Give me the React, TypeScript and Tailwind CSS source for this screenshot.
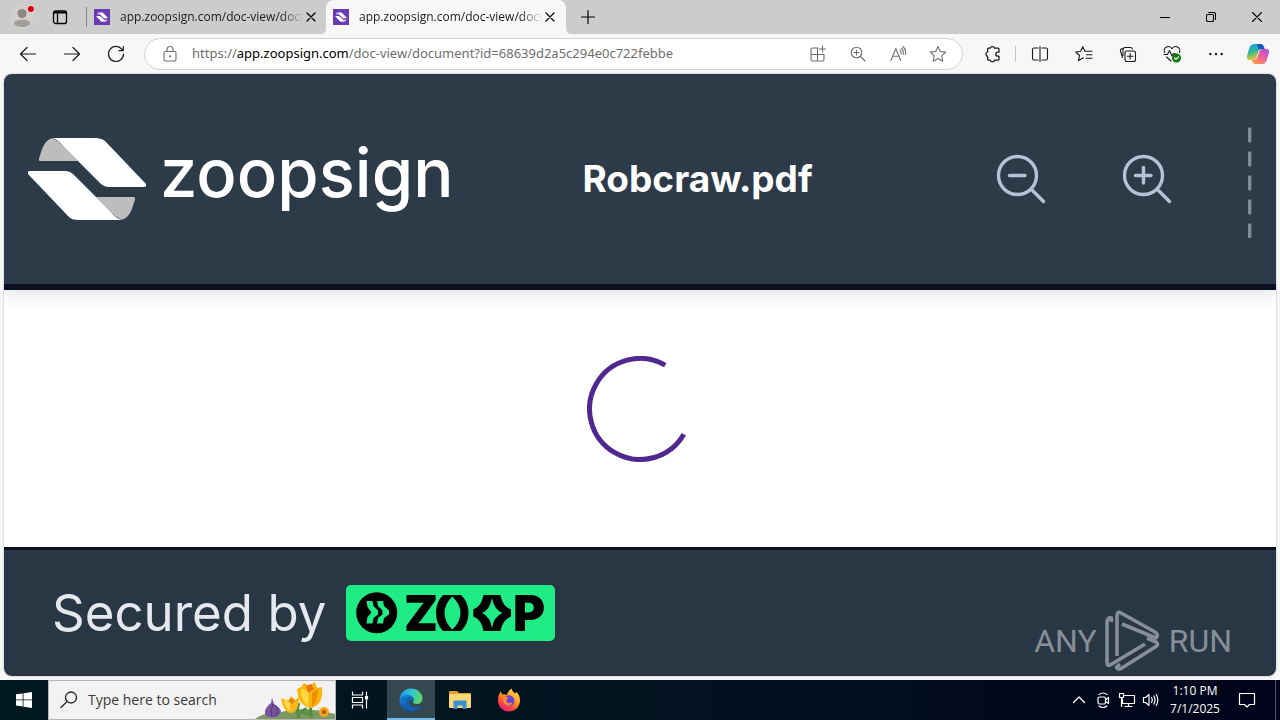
import type { ReactNode } from "react";

type IconProps = { children: ReactNode; className?: string; box?: string; width?: number };

function Icon({ children, className = "size-5", box = "0 0 20 20", width = 1.1 }: IconProps) {
  return (
    <svg
      viewBox={box}
      className={className}
      fill="none"
      stroke="currentColor"
      strokeWidth={width}
      strokeLinecap="round"
      strokeLinejoin="round"
      aria-hidden="true"
    >
      {children}
    </svg>
  );
}

function BarButton({ label, children, className = "w-11" }: { label: string; children: ReactNode; className?: string }) {
  return (
    <button type="button" aria-label={label} className={`flex h-8 shrink-0 items-center justify-center ${className}`}>
      {children}
    </button>
  );
}

function Favicon() {
  return (
    <svg viewBox="0 0 16 16" className="size-4 shrink-0" aria-hidden="true">
      <rect width="16" height="16" fill="#6a3ab2" />
      <path d="M4 3.4H8.6L13.6 8.6Q13.8 9.2 13.2 9.2H10L6 5.6Q5.2 4 4 3.4Z" fill="#fff" />
      <path d="M12 12.8H7.4L2.4 7.6Q2.2 7 2.8 7H6L10 10.6Q10.8 12.2 12 12.8Z" fill="#fff" />
      <path d="M4 3.4Q3 4.2 2.8 5.6H6Z" fill="#cdb8ea" />
      <path d="M12 12.8Q13 12 13.2 10.4H9.8Z" fill="#cdb8ea" />
    </svg>
  );
}

function Tab({ active = false }: { active?: boolean }) {
  return (
    <div
      role="tab"
      aria-selected={active}
      className={`relative flex h-full w-60 items-center rounded-t-lg pl-[7px] ${active ? "bg-[#f7f7f7]" : ""}`}
    >
      {active && (
        <>
          <svg viewBox="0 0 6 6" className="absolute bottom-0 -left-1.5 size-1.5" aria-hidden="true">
            <path d="M6 0V6H0Q6 6 6 0Z" fill="#f7f7f7" />
          </svg>
          <svg viewBox="0 0 6 6" className="absolute -right-1.5 bottom-0 size-1.5" aria-hidden="true">
            <path d="M0 0V6H6Q0 6 0 0Z" fill="#f7f7f7" />
          </svg>
        </>
      )}
      <Favicon />
      <span className="ml-2.5 shrink-0 text-xs whitespace-nowrap text-[#1b1b1b] [mask-image:linear-gradient(to_right,black_86%,transparent_98%)]">
        app.zoopsign.com/doc-view/docu
      </span>
      <button type="button" aria-label="Close tab" className="absolute right-[9px] flex h-6 w-3.5 items-center justify-center">
        <Icon className="size-2.5" box="0 0 10 10" width={1.2}>
          <path d="M1 1L9 9M9 1L1 9" />
        </Icon>
      </button>
    </div>
  );
}

function TabStrip() {
  return (
    <div className="flex h-[34px] items-center bg-[#ccc]">
      <button type="button" aria-label="Profile" className="flex w-11 justify-center">
        <svg viewBox="0 0 24 24" className="size-6" aria-hidden="true">
          <circle cx="12" cy="12" r="11.5" fill="#d2d0ce" />
          <circle cx="12" cy="8.6" r="4.6" fill="#8d8986" />
          <path d="M4 18.5Q4 14.8 12 14.8T20 18.5Q18 22 12 22T4 18.5Z" fill="#a19d9a" />
          <circle cx="20.8" cy="4" r="4.2" fill="#f0d0d0" />
          <circle cx="20.8" cy="4" r="3" fill="#d4000f" />
        </svg>
      </button>
      <button type="button" aria-label="Tab actions" className="flex w-8 justify-center">
        <Icon className="size-4" box="0 0 16 16" width={1.3}>
          <rect x="1.5" y="2" width="13" height="12.5" rx="2" />
          <path d="M2 3.5H14" strokeWidth="2" />
          <path d="M5.5 5V14" />
        </Icon>
      </button>
      <div className="ml-2.5 h-5 w-px bg-[#8a8a8a]" />
      <div role="tablist" className="flex h-full">
        <div className="-mr-px flex">
          <Tab />
        </div>
        <Tab active />
      </div>
      <button type="button" aria-label="New tab" className="ml-2 flex w-7 justify-center">
        <Icon className="size-4" box="0 0 16 16" width={1.2}>
          <path d="M8 1.5V14.5M1.5 8H14.5" />
        </Icon>
      </button>
      <div className="ml-auto flex text-black">
        <BarButton label="Minimize" className="w-[46px]">
          <Icon className="size-2.5" box="0 0 10 10">
            <path d="M0.5 5.5H9.5" />
          </Icon>
        </BarButton>
        <BarButton label="Restore" className="w-[46px]">
          <Icon className="size-2.5" box="0 0 10 10">
            <rect x="0.5" y="2.5" width="7" height="7" rx="1.2" />
            <path d="M2.8 0.5H7.5Q9.5 0.5 9.5 2.5V7.4" />
          </Icon>
        </BarButton>
        <BarButton label="Close" className="w-[46px]">
          <Icon className="size-2.5" box="0 0 10 10">
            <path d="M0.5 0.5L9.5 9.5M9.5 0.5L0.5 9.5" />
          </Icon>
        </BarButton>
      </div>
    </div>
  );
}

function Toolbar() {
  return (
    <div className="flex h-10 items-center bg-[#f7f7f7] pr-0.5 pl-1.5 text-[#1b1b1b]">
      <BarButton label="Back">
        <Icon width={1.2}>
          <path d="M17.5 10H2.5M9 3.5L2.5 10L9 16.5" />
        </Icon>
      </BarButton>
      <BarButton label="Forward">
        <Icon width={1.2}>
          <path d="M2.5 10H17.5M11 3.5L17.5 10L11 16.5" />
        </Icon>
      </BarButton>
      <BarButton label="Refresh">
        <Icon width={1.2}>
          <path d="M17.5 10A7.5 7.5 0 1 1 15.8 5.2L17 6.6M17.3 2.5V6.7H13" />
        </Icon>
      </BarButton>
      <div className="mr-2 ml-1.5 flex h-8 min-w-0 flex-1 items-center rounded-full border border-[#d4d4d4] bg-white pl-[15px] text-[#6e6e6e]">
        <Icon>
          <rect x="4" y="7.5" width="12" height="9.5" rx="1.5" />
          <path d="M7 7.5V5.5A3 3 0 0 1 13 5.5V7.5" />
          <circle cx="10" cy="12.2" r="0.5" fill="currentColor" />
        </Icon>
        <div
          role="textbox"
          aria-label="Address and search bar"
          contentEditable
          suppressContentEditableWarning
          className="ml-3 min-w-0 flex-1 truncate font-['Noto_Sans','Open_Sans',sans-serif] text-[13px] outline-none"
        >
          https://<span className="text-black">app.zoopsign.com</span>/doc-view/document?id=68639d2a5c294e0c722febbe
        </div>
        <div className="mr-1 flex">
          <BarButton label="Install app" className="w-10">
            <Icon className="size-[18px]" box="0 0 18 18">
              <path d="M9 3H3.5Q2 3 2 4.5V14.5Q2 16 3.5 16H13.5Q15 16 15 14.5V9.5M2 9.5H15M8.5 3V16M13.5 1V7M10.5 4H16.5" />
            </Icon>
          </BarButton>
          <BarButton label="Page zoom" className="w-10">
            <Icon className="size-[18px]" box="0 0 18 18">
              <circle cx="7.5" cy="7.5" r="5.3" />
              <path d="M11.5 11.5L16 16M7.5 5V10M5 7.5H10" />
            </Icon>
          </BarButton>
          <BarButton label="Read aloud" className="w-10">
            <Icon className="size-[18px]" box="0 0 18 18">
              <path d="M2 15.5L6.8 3.5L11.6 15.5M3.7 11.3H9.9M11 5.2Q12.5 6.7 12 9M12.3 3Q15 5.5 14.2 9.5M14 1.5Q17.6 4.8 16.4 9.5" />
            </Icon>
          </BarButton>
          <BarButton label="Add to favorites" className="w-10">
            <Icon>
              <path d="M10 2.5L12.3 7.5L17.7 8.1L13.7 11.8L14.8 17.2L10 14.5L5.2 17.2L6.3 11.8L2.3 8.1L7.7 7.5Z" />
            </Icon>
          </BarButton>
        </div>
      </div>
      <BarButton label="Extensions">
        <Icon width={1.3}>
          <path d="M5.6 4.2H7.2A2.3 2.3 0 0 1 11.6 4.2H15Q16 4.2 16 5.2V8.2H14.8A2 2 0 0 0 14.8 12.2H16V15.2Q16 16.2 15 16.2H11.6A2.3 2.3 0 0 1 7.2 16.2H5.8Q4.6 16.2 4.6 15.2V12.4A2.3 2.3 0 0 1 4.6 8V5.2Q4.6 4.2 5.6 4.2" />
        </Icon>
      </BarButton>
      <div className="mr-0.5 h-4 w-px bg-[#c4c4c4]" />
      <BarButton label="Split screen">
        <Icon>
          <path d="M8 4H4Q2.5 4 2.5 5.5V14.5Q2.5 16 4 16H8M12 4H16Q17.5 4 17.5 5.5V14.5Q17.5 16 16 16H12M10 2.5V17.5" />
        </Icon>
      </BarButton>
      <BarButton label="Favorites">
        <Icon>
          <path d="M10.5 7.2H18M12.5 10.7H18M12 14.2H18M9.5 13.8L4.5 16.6L5.5 11.5L1.8 8L6.6 7.3L8.8 2.8L10.8 7" />
        </Icon>
      </BarButton>
      <BarButton label="Collections">
        <Icon>
          <rect x="7" y="7" width="10.5" height="10.5" rx="2" />
          <path d="M12.2 9.5V15M9.5 12.2H15M4.5 13.5L2.5 7Q2 5.3 3.7 4.8L6 4M5 11.5V5.5Q5 3.5 7 3.5H12.5Q14 3.5 14.3 5" />
        </Icon>
      </BarButton>
      <BarButton label="Browser essentials">
        <Icon>
          <path d="M2.6 8.5A4 4 0 0 1 10 4.8A4 4 0 0 1 17.4 8.5M2 10.5H5.5L7.5 6.5L10 12L11.5 9.5H13M4.5 13L9 17" />
          <circle cx="14.5" cy="14" r="4.5" fill="#107c10" stroke="none" />
          <path d="M12.5 14L14 15.4L16.6 12.7" stroke="#fff" />
        </Icon>
      </BarButton>
      <BarButton label="Settings and more">
        <svg viewBox="0 0 20 20" className="size-5" fill="currentColor" aria-hidden="true">
          <circle cx="4.3" cy="10" r="1.2" />
          <circle cx="10" cy="10" r="1.2" />
          <circle cx="15.7" cy="10" r="1.2" />
        </svg>
      </BarButton>
      <BarButton label="Copilot" className="w-10">
        <svg viewBox="0 0 24 24" className="size-6" aria-hidden="true">
          <defs>
            <linearGradient id="cop-a" x1="0" y1="0" x2="0.3" y2="1">
              <stop offset="0" stopColor="#1fa3f0" />
              <stop offset="0.5" stopColor="#2cb59a" />
              <stop offset="1" stopColor="#f0c92f" />
            </linearGradient>
            <linearGradient id="cop-b" x1="1" y1="0" x2="0.2" y2="1">
              <stop offset="0" stopColor="#a052e8" />
              <stop offset="0.5" stopColor="#ee5fa0" />
              <stop offset="1" stopColor="#fb9a4b" />
            </linearGradient>
          </defs>
          <path d="M8 2H15Q17 2 18 5L18.6 7H15Q13 7 12.3 9.5L10.3 16Q9.5 18 7.5 18H4Q0 18 1.2 13L3.5 5.5Q4.6 2 8 2Z" fill="url(#cop-a)" />
          <path d="M11 2H15Q17 2 18 5L18.6 7H15Q13 7 12.6 8Z" fill="#1754c4" />
          <path d="M16 22H9Q7 22 6.3 19.5L5.8 18H8.5Q10.5 18 11.4 15L13.6 8.5Q14.3 7 16 7H20Q24 7 22.8 11.5L20.5 18.5Q19.4 22 16 22Z" fill="url(#cop-b)" />
        </svg>
      </BarButton>
    </div>
  );
}

function ZoopsignLogo() {
  const band = "M22 0H67C72 0 75 1 78 4L118 46Q119 49 116 49H81Q76 49 72 45L36 9C31 3 27 0 22 0Z";
  const fold = "M22 1C16 3 13 14 11 20.5Q10.5 23 12 23H50L33 6C29 2 25 0 22 1Z";
  return (
    <a href="#home" className="flex items-center gap-3.5 text-white">
      <svg viewBox="0 0 118 82" className="h-[82px] w-[118px] shrink-0" aria-hidden="true">
        <path d={fold} fill="#bdbdbd" />
        <path d={band} fill="#fff" />
        <g transform="rotate(180 59 41)">
          <path d={fold} fill="#bdbdbd" />
          <path d={band} fill="#fff" />
        </g>
      </svg>
      <span className="-mt-3 font-[Inter,sans-serif] text-[67px] leading-20 font-medium">zoopsign</span>
    </a>
  );
}

function ZoomButton({ label, plus = false }: { label: string; plus?: boolean }) {
  return (
    <button type="button" aria-label={label} className="text-[#b3c3d3]">
      <Icon className="size-[50px]" box="0 0 50 50" width={3.4}>
        <circle cx="21.5" cy="21.5" r="19" />
        <path d="M35.5 35.5L47.5 47.5M13.5 21.5H29" />
        {plus && <path d="M21.5 13.5V29" />}
      </Icon>
    </button>
  );
}

function ZoopBadge() {
  return (
    <svg viewBox="0 0 209 56" className="h-14 w-[209px]" role="img" aria-label="ZOOP">
      <rect width="209" height="56" rx="5" fill="#1fec85" />
      <circle cx="30.7" cy="27.7" r="20.5" />
      <path d="M20.5 16H26.5L27.5 21L32 25.5V29.5L27.5 33L26.5 38.5H20.5L21.5 32L25.5 27.5L21.5 22Z" fill="#1fec85" />
      <path d="M31 16H37L38 21L43 25.5V29.5L38 33L37 38.5H31L32 33L36.5 29.5V25.5L32 21Z" fill="#1fec85" />
      <text x="58" y="45.5" className="font-[Inter,sans-serif] text-[49px] font-black">Z</text>
      <path d="M97 10H115Q122.5 17 122.5 28T115 46H97Q90 39 90 28T97 10Z" />
      <path d="M106.3 11.5Q114.5 19 114.5 28T106.3 44.5Q98.5 37 98.5 28T106.3 11.5Z" fill="#1fec85" />
      <path d="M137.5 10H154.5Q156.5 21.5 165 24.5V31.5Q156.5 34.5 154.5 46H137.5Q135.5 34.5 127.3 31.5V24.5Q135.5 21.5 137.5 10Z" />
      <path d="M146 13Q148 24.5 156.5 28Q148 31.5 146 43Q144 31.5 136 28Q144 24.5 146 13Z" fill="#1fec85" />
      <text x="167" y="45.5" className="font-[Inter,sans-serif] text-[49px] font-black">P</text>
    </svg>
  );
}

function Watermark() {
  return (
    <div className="pointer-events-none absolute right-11 bottom-0 flex h-[70px] items-center gap-2 font-[Roboto,sans-serif] text-[32px] text-[#868e97]">
      <span>ANY</span>
      <svg viewBox="0 0 56 62" className="h-[62px] w-14" fill="none" stroke="currentColor" strokeWidth="3.6" strokeLinejoin="round" aria-hidden="true">
        <path d="M6.5 12V8Q2 7 2 13V52Q2 57 6 54.5L40 34" />
        <path d="M12 46V6Q12 1 16 3L50 22Q54 25 51 28L17 14" />
        <path d="M42 28L51 32Q54 34 51 36.5L16 58.5Q12 60 11.5 57L15 54" />
      </svg>
      <span>RUN</span>
    </div>
  );
}

function DocumentPage() {
  return (
    <div className="mx-1 mb-1 flex flex-1 flex-col overflow-hidden rounded-lg bg-white shadow-[0_0_2px_rgba(0,0,0,0.35)]">
      <header className="flex items-center border-b-6 border-[#0b1120] bg-[#2d3a48] px-6 py-[46px] shadow-[0_4px_16px_rgba(70,70,110,0.16)]">
        <ZoopsignLogo />
        <h1 className="ml-[129px] font-[Inter,sans-serif] text-[37px] leading-14 font-bold text-white">Robcraw.pdf</h1>
        <div className="ml-auto flex items-center gap-[76px]">
          <ZoomButton label="Zoom out" />
          <ZoomButton label="Zoom in" plus />
          <svg viewBox="0 0 4 118" className="h-[118px] w-1" aria-hidden="true">
            <path d="M1.7 9V117" stroke="#7e8a96" strokeWidth="3.4" strokeLinecap="round" strokeDasharray="12 12" />
          </svg>
        </div>
      </header>
      <main className="flex flex-1 items-center justify-center pb-5" aria-busy="true">
        <svg viewBox="0 0 106 106" className="size-[106px]" role="img" aria-label="Loading">
          <path d="M78.3 9.2A50.5 50.5 0 1 0 96.8 78.2" fill="none" stroke="#51288f" strokeWidth="5" />
        </svg>
      </main>
      <footer className="relative flex items-center gap-5 border-t-3 border-[#0b1120] bg-[#293644] px-12 py-[35px]">
        <span className="font-[Inter,sans-serif] text-[51px] leading-14 text-[#e6e8ef]">Secured by</span>
        <ZoopBadge />
        <Watermark />
      </footer>
    </div>
  );
}

function Flowers() {
  return (
    <svg viewBox="0 0 80 38" className="h-[38px] w-20 shrink-0" aria-hidden="true">
      <path d="M0 38Q8 31 24 32Q46 24 80 33V38Z" fill="#7b9a63" />
      <path d="M44 37Q41 29 44 22M57 36Q54 29 57 22" stroke="#56893c" strokeWidth="3" fill="none" />
      <path d="M17 17L19 23Q26 27 26 31Q24 37 16 36Q9 36 10 30Q11 26 16 22Z" fill="#77549e" />
      <path d="M18 23Q15 29 17 36M20 24Q24 29 21 35" stroke="#533274" fill="none" />
      <path d="M26 17L33 20L36 15L40 19L44 16Q44 31 36 32Q28 31 26 17Z" fill="#f7b719" />
      <path d="M29 18Q29 26 35 30L35 19Z" fill="#ffd84a" />
      <path d="M42 8L46 6L49 2L54 5L60 1L62 7L67 6Q69 24 56 27Q43 25 42 8Z" fill="#fab60d" />
      <path d="M46 8Q46 20 53 25L54 10Z" fill="#ffdb43" />
      <path d="M63 8Q63 21 57 26L57 12Z" fill="#ed9100" />
      <path d="M51 5L56 3L59 8L53 12Z" fill="#ed7413" />
      <path d="M33 20L37 17L40 20L37 23Z" fill="#e88412" />
      <path d="M41 32L51 26L55 35M59 35L65 25L61 33" fill="#5b9142" />
      <circle cx="69" cy="31" r="5" fill="#f6a623" />
      <circle cx="69" cy="31" r="2.2" fill="#b85a12" />
    </svg>
  );
}

function Taskbar() {
  return (
    <nav aria-label="Taskbar" className="flex h-10 items-center bg-linear-to-r from-[#001820] via-[#021320] to-[#01041a] text-white">
      <button type="button" aria-label="Start" className="flex h-full w-12 items-center justify-center">
        <svg viewBox="0 0 16 16" className="size-4" fill="#fff" aria-hidden="true">
          <path d="M0 2.3L6.7 1.4V7.5H0ZM7.5 1.3L16 0V7.5H7.5ZM0 8.3H6.7V14.5L0 13.6ZM7.5 8.3H16V16L7.5 14.7Z" />
        </svg>
      </button>
      <label className="flex h-full w-72 items-center border border-[#b9b4b4] bg-[#f2f2f2] pl-2.5 text-[#222]">
        <Icon width={1.3}>
          <circle cx="12" cy="7.5" r="5.5" />
          <path d="M8 11.5L2 17.5" />
        </Icon>
        <input
          type="text"
          aria-label="Search"
          placeholder="Type here to search"
          className="ml-[9px] min-w-0 flex-1 bg-transparent text-sm outline-none placeholder:text-[#3a3a3a]"
        />
        <Flowers />
      </label>
      <button type="button" aria-label="Task view" className="mr-[3px] flex h-full w-12 items-center justify-center">
        <Icon className="size-[18px]" box="0 0 18 18" width={1.2}>
          <path d="M1.5 1V4H11.5V1M1.5 17V14H11.5V17M1.5 6.5H11.5V11.5H1.5ZM15.5 1V4.5M15.5 9V17" />
          <rect x="14.5" y="5.5" width="2" height="2.5" fill="#fff" />
        </Icon>
      </button>
      <button type="button" aria-label="Microsoft Edge" className="flex h-full w-12 items-center justify-center border-b-2 border-[#76b9ed] bg-[#33484f] pt-0.5">
        <svg viewBox="0 0 24 24" className="size-6" aria-hidden="true">
          <defs>
            <linearGradient id="edge-top" x1="0" y1="0.4" x2="1" y2="0.6">
              <stop offset="0" stopColor="#1b9de2" />
              <stop offset="0.5" stopColor="#2fc5d0" />
              <stop offset="1" stopColor="#62d85a" />
            </linearGradient>
            <linearGradient id="edge-low" x1="0" y1="0" x2="0.6" y2="1">
              <stop offset="0" stopColor="#1a86d8" />
              <stop offset="1" stopColor="#0b4a9e" />
            </linearGradient>
          </defs>
          <path d="M0.5 11C1.5 4.5 6 0.5 12 0.5C19 0.5 23.5 5.5 23.5 10.5C23.5 14 21 16 18 16C15 16 13.6 15 14.2 14C15.5 11.5 14 8 9.5 8C5 8 1.5 9 0.5 11Z" fill="url(#edge-top)" />
          <path d="M0.5 12C0.5 8.5 5 6.5 9 7C13 7.5 15 10 15 12C12 10.5 9.5 13 10.2 16C11 19.5 15 21.5 19.5 20C16 24 11 24.5 7 22.5C3 20.5 0.5 16.5 0.5 12Z" fill="url(#edge-low)" />
          <path d="M9.5 9.5C6 13 7 20.5 12.5 23.4C16 23.5 19.5 22 21.8 18.8C22 18.3 21.6 18 21 18.3C16 20.5 11 18.5 10.2 15.5C9.6 13 10.5 11 12.5 10.5Q11.5 9 9.5 9.5Z" fill="#135dae" />
        </svg>
      </button>
      <button type="button" aria-label="File Explorer" className="flex h-full w-[49px] items-center justify-center">
        <svg viewBox="0 0 22 20" className="h-5 w-[22px]" aria-hidden="true">
          <path d="M0 2Q0 1 1 1H8L10 3H21Q22 3 22 4V8H0Z" fill="#e0a02c" />
          <rect y="4" width="22" height="14" rx="0.8" fill="#fbd873" />
          <path d="M4.5 19V11.5Q4.5 10.5 5.5 10.5H16.5Q17.5 10.5 17.5 11.5V19H13.5V15.5H8.5V19Z" fill="#3b8fd6" />
        </svg>
      </button>
      <button type="button" aria-label="Firefox" className="flex h-full w-[49px] items-center justify-center">
        <svg viewBox="0 0 24 24" className="size-6" aria-hidden="true">
          <defs>
            <linearGradient id="fox" x1="0.8" y1="0" x2="0.2" y2="1">
              <stop offset="0" stopColor="#ffe53b" />
              <stop offset="0.45" stopColor="#ff9422" />
              <stop offset="0.75" stopColor="#ff3d4d" />
              <stop offset="1" stopColor="#e41c86" />
            </linearGradient>
          </defs>
          <path d="M3.5 3.5L5.5 6.5Q8 6 9.5 7.3Q11 3 14.5 0.5Q15 3.5 18 5.5L19.5 4Q23.5 8.5 23 13.5C22 20 17.5 23.5 12 23.5C5.5 23.5 1 18.5 1 12.5Q1 7 3.5 3.5Z" fill="url(#fox)" />
          <circle cx="12" cy="12.8" r="5.5" fill="#6a40d8" />
          <path d="M6 9.5Q9 8 11.5 10Q9 11.5 9.5 13.5Q11 16.5 15.5 14.5Q14 18.8 10 17.5Q5.5 15.5 6 9.5Z" fill="#ff8a2a" />
        </svg>
      </button>
      <div className="ml-auto flex h-full items-center">
        <BarButton label="Show hidden icons" className="w-6">
          <Icon className="size-4" box="0 0 16 16" width={1.4}>
            <path d="M2.5 10.5L8 5L13.5 10.5" />
          </Icon>
        </BarButton>
        <BarButton label="Meet now" className="w-6">
          <Icon className="size-4" box="0 0 16 16" width={1.2}>
            <rect x="3" y="5" width="7.5" height="7" rx="1.5" />
            <path d="M10.5 8L13.5 5.5V11.5L10.5 9.5M4 2.5Q8 -0.5 12 2.5M4 14Q8 17 12 14" />
          </Icon>
        </BarButton>
        <BarButton label="Network" className="w-6">
          <Icon className="size-[18px]" box="0 0 18 18" width={1.2}>
            <path d="M6.5 4.5H16.5V12.5H4.5V8M10.5 12.5V15.5M7 15.5H14M1.5 2.5H5.5V6.5H1.5ZM3.5 6.5V15.5" />
          </Icon>
        </BarButton>
        <BarButton label="Volume" className="w-6">
          <Icon className="size-[18px]" box="0 0 18 18" width={1.2}>
            <path d="M1.5 6.5H3.5L7 3.5V14.5L3.5 11.5H1.5ZM9.5 6.5Q11 9 9.5 11.5M11.8 5Q14.2 9 11.8 13M14.2 3.5Q17.5 9 14.2 14.5" />
          </Icon>
        </BarButton>
        <time dateTime="2025-07-01T13:10" className="flex w-16 flex-col items-center text-xs leading-[18px] whitespace-nowrap">
          <span>1:10 PM</span>
          <span>7/1/2025</span>
        </time>
        <BarButton label="Notifications" className="w-10">
          <Icon className="size-[18px]" box="0 0 18 18" width={1.2}>
            <path d="M1.5 2.5H16.5V13.5H11.5L9 16L6.5 13.5H1.5Z" />
          </Icon>
        </BarButton>
        <button type="button" aria-label="Show desktop" className="ml-2 h-full w-[5px] border-l border-[#4b5563]" />
      </div>
    </nav>
  );
}

export default function App() {
  return (
    <div className="flex min-h-screen flex-col bg-[#f7f7f7] font-['Open_Sans','Noto_Sans',sans-serif] text-black">
      <TabStrip />
      <Toolbar />
      <DocumentPage />
      <Taskbar />
    </div>
  );
}
